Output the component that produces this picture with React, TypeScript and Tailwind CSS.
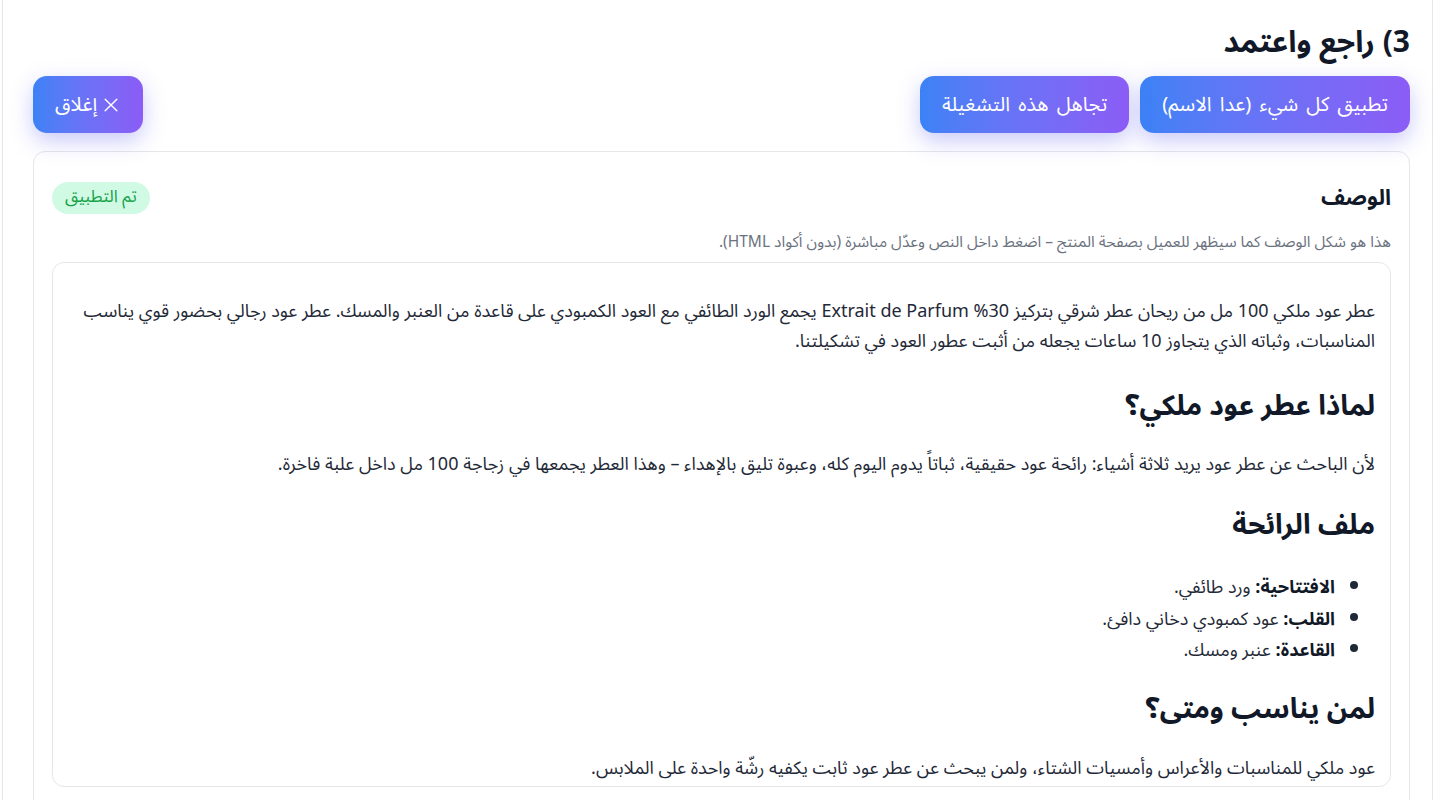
import React from "react";

const font = { fontFamily: "'Noto Sans Arabic', 'Noto Sans', 'DejaVu Sans', sans-serif" };

function GradBtn({ children }: { children: React.ReactNode }) {
  return (
    <button className="flex h-[57px] items-center gap-2 rounded-[14px] bg-gradient-to-r from-[#3b82f6] to-[#8b5cf6] px-[22px] text-[20px] text-white [word-spacing:3px] shadow-[0_8px_22px_rgba(99,102,241,0.35)]">
      {children}
    </button>
  );
}

export default function App() {
  return (
    <div dir="rtl" style={font} className="min-h-screen bg-white">
      <div className="ml-[2px] mr-[10px] border-x border-[#e5e7eb] pl-[30px] pr-[22px] pt-[24px]">
        <h1 className="text-[30px] font-bold leading-[38px] text-[#111827]">3) راجع واعتمد</h1>
        <div className="mt-[14px] flex items-center justify-between">
          <div className="flex items-center gap-[11px]">
            <GradBtn>تطبيق كل شيء (عدا الاسم)</GradBtn>
            <GradBtn>تجاهل هذه التشغيلة</GradBtn>
          </div>
          <GradBtn>
            <svg width="20" height="20" viewBox="0 0 24 24" fill="none" stroke="currentColor" strokeWidth="1.7" strokeLinecap="round">
              <path d="M19 5 5 19M5 5l14 14" />
            </svg>
            <span className="-mr-[4px]">إغلاق</span>
          </GradBtn>
        </div>
        <div className="mt-[18px] rounded-xl border border-[#e5e7eb] px-[18px] pt-[30px]">
          <div className="flex items-center justify-between">
            <h3 className="text-[22px] font-bold leading-[32px] text-[#111827]">الوصف</h3>
            <span className="rounded-full bg-[#d1fae5] px-[13px] py-[3px] text-[17px] text-[#16a34a]">تم التطبيق</span>
          </div>
          <p className="mt-[18px] text-[15.5px] leading-[20px] text-[#6b7280]">
            هذا هو شكل الوصف كما سيظهر للعميل بصفحة المنتج – اضغط داخل النص وعدّل مباشرة (بدون أكواد HTML).
          </p>
          <div className="mt-[10px] h-[525px] overflow-hidden rounded-xl border border-[#e5e7eb] px-[15px] py-[16px] text-[18px] text-[#1f2937]">
            <p className="my-[17px] leading-[30px]">
              عطر عود ملكي 100 مل من ريحان عطر شرقي بتركيز 30% Extrait de Parfum يجمع الورد الطائفي مع العود الكمبودي على قاعدة من العنبر والمسك. عطر عود رجالي بحضور قوي يناسب المناسبات، وثباته الذي يتجاوز 10 ساعات يجعله من أثبت عطور العود في تشكيلتنا.
            </p>
            <h2 className="mb-[22px] mt-[31px] text-[28px] font-bold leading-[40px] text-[#111827]">لماذا عطر عود ملكي؟</h2>
            <p className="my-[17px] leading-[30px]">
              لأن الباحث عن عطر عود يريد ثلاثة أشياء: رائحة عود حقيقية، ثباتاً يدوم اليوم كله، وعبوة تليق بالإهداء – وهذا العطر يجمعها في زجاجة 100 مل داخل علبة فاخرة.
            </p>
            <h2 className="mb-[26px] mt-[27px] text-[28px] font-bold leading-[40px] text-[#111827]">ملف الرائحة</h2>
            <ul className="list-disc pr-[40px] leading-[31.5px]">
              <li><b className="font-bold text-[#111827]">الافتتاحية:</b> ورد طائفي.</li>
              <li><b className="font-bold text-[#111827]">القلب:</b> عود كمبودي دخاني دافئ.</li>
              <li><b className="font-bold text-[#111827]">القاعدة:</b> عنبر ومسك.</li>
            </ul>
            <h2 className="mb-[23px] mt-[23px] text-[28px] font-bold leading-[40px] text-[#111827]">لمن يناسب ومتى؟</h2>
            <p className="my-[17px] leading-[30px]">
              عود ملكي للمناسبات والأعراس وأمسيات الشتاء، ولمن يبحث عن عطر عود ثابت يكفيه رشّة واحدة على الملابس.
            </p>
          </div>
          <div className="h-[40px]" />
        </div>
      </div>
    </div>
  );
}
